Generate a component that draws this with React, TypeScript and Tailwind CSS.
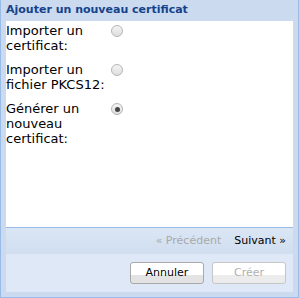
export default function App() {
  const rows = [
    { label: ["Importer un", "certificat:"], checked: false },
    { label: ["Importer un", "fichier PKCS12:"], checked: false },
    { label: ["Générer un", "nouveau", "certificat:"], checked: true },
  ];

  return (
    <div
      className="w-[299px] h-[298px] bg-white"
      style={{ fontFamily: '"DejaVu Sans", "Noto Sans", sans-serif' }}
    >
      {/* Window frame */}
      <div className="w-[299px] h-[298px] border-l border-r border-b border-[#99bbe8] bg-[#cbdaee] flex flex-col">
        {/* Title bar */}
        <div className="h-[21px] px-[5px] flex items-center text-[11px] font-bold text-[#15428b]">
          Ajouter un nouveau certificat
        </div>

        {/* Body */}
        <div className="flex-1 mx-[5px] mb-[5px] flex flex-col bg-[#dfe8f6]">
          <div className="flex-1 bg-white pt-[2px] flex flex-col gap-[9px]">
            {rows.map((r, i) => (
              <div key={i} className="flex items-start">
                <div className="w-[104px] text-[13px] leading-[15px] text-black">
                  {r.label.map((l) => (
                    <div key={l}>{l}</div>
                  ))}
                </div>
                <div className="pt-[2px] pl-[1px]">
                  <span className="w-[12px] h-[12px] rounded-full border border-[#b5b5b5] bg-gradient-to-b from-[#f4f4f4] to-[#dedede] flex items-center justify-center">
                    {r.checked && <span className="w-[5px] h-[5px] rounded-full bg-[#444]" />}
                  </span>
                </div>
              </div>
            ))}
          </div>

          {/* Wizard nav toolbar */}
          <div className="h-[27px] border-t border-[#99bbe8] bg-gradient-to-b from-[#dae6f4] to-[#d0def0] flex items-center justify-end gap-[13px] pr-[7px] text-[11px]">
            <span className="text-[#a9a9a9]">« Précédent</span>
            <span className="text-black">Suivant »</span>
          </div>

          {/* Footer buttons */}
          <div className="h-[38px] flex items-center justify-end gap-[8px] pr-[7px] text-[11px]">
            <button className="w-[74px] h-[22px] rounded-[3px] border border-[#a9a9a9] bg-gradient-to-b from-white from-60% to-[#e3e3e3] to-60% text-black">
              Annuler
            </button>
            <button className="w-[74px] h-[22px] rounded-[3px] border border-[#c6c6c6] bg-gradient-to-b from-white from-60% to-[#ececec] to-60% text-[#b0b0b0]">
              Créer
            </button>
          </div>
        </div>
      </div>
    </div>
  );
}
